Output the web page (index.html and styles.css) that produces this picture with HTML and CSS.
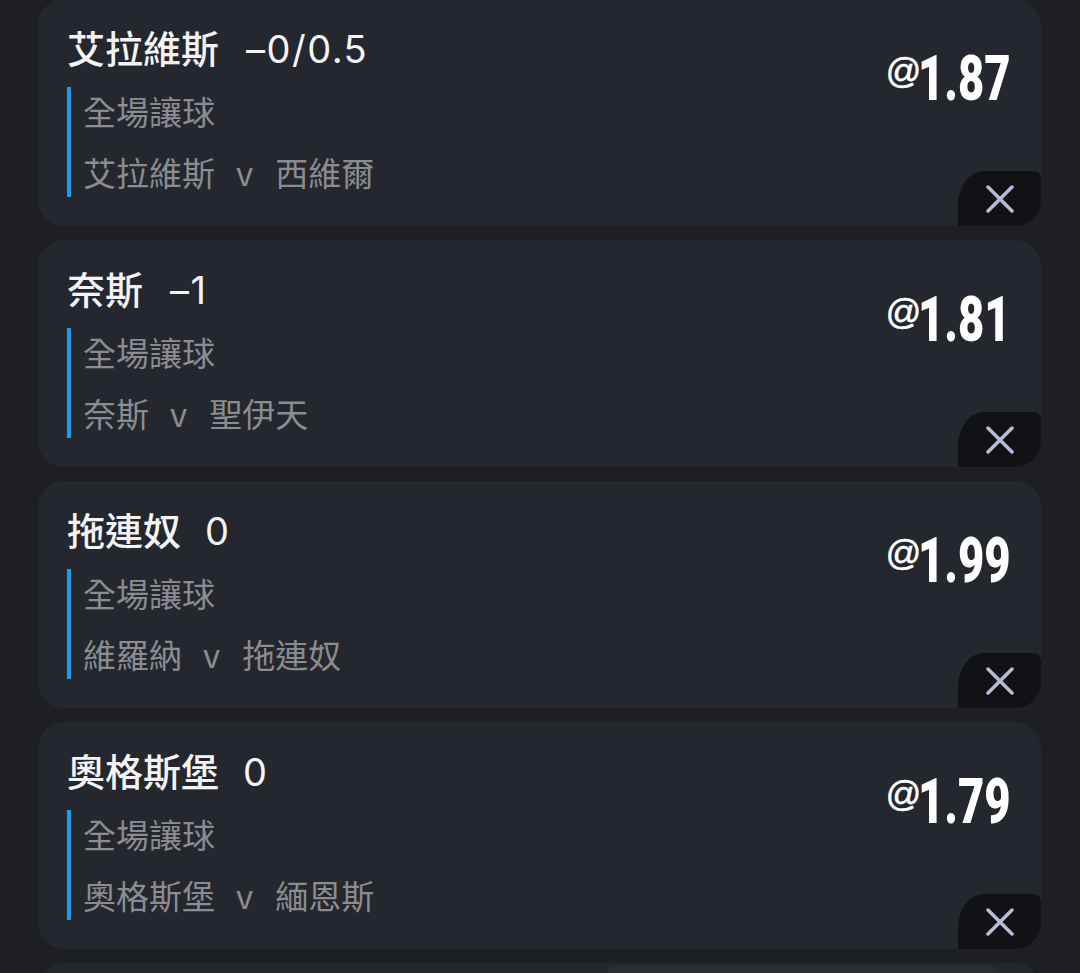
FILE: index.html
```html
<!DOCTYPE html>
<html lang="zh-Hant">
<head>
<meta charset="utf-8">
<title>Bet slip</title>
<link rel="stylesheet" href="styles.css">
</head>
<body>
<div class="list">
  <div class="card">
    <div class="info">
      <div class="title">艾拉維斯<span class="line">–0/0.5</span></div>
      <div class="detail">
        <div class="row">全場讓球</div>
        <div class="row">艾拉維斯<span class="vs">v</span>西維爾</div>
      </div>
    </div>
    <div class="odds"><span class="at">@</span><span class="num">1.87</span></div>
    <button class="close" aria-label="remove"><svg viewBox="0 0 28 28" width="28" height="28"><path d="M2 2L26 26M26 2L2 26"/></svg></button>
  </div>
  <div class="card">
    <div class="info">
      <div class="title">奈斯<span class="line">–1</span></div>
      <div class="detail">
        <div class="row">全場讓球</div>
        <div class="row">奈斯<span class="vs">v</span>聖伊天</div>
      </div>
    </div>
    <div class="odds"><span class="at">@</span><span class="num">1.81</span></div>
    <button class="close" aria-label="remove"><svg viewBox="0 0 28 28" width="28" height="28"><path d="M2 2L26 26M26 2L2 26"/></svg></button>
  </div>
  <div class="card">
    <div class="info">
      <div class="title">拖連奴<span class="line short">0</span></div>
      <div class="detail">
        <div class="row">全場讓球</div>
        <div class="row">維羅納<span class="vs">v</span>拖連奴</div>
      </div>
    </div>
    <div class="odds"><span class="at">@</span><span class="num">1.99</span></div>
    <button class="close" aria-label="remove"><svg viewBox="0 0 28 28" width="28" height="28"><path d="M2 2L26 26M26 2L2 26"/></svg></button>
  </div>
  <div class="card">
    <div class="info">
      <div class="title">奧格斯堡<span class="line short">0</span></div>
      <div class="detail">
        <div class="row">全場讓球</div>
        <div class="row">奧格斯堡<span class="vs">v</span>緬恩斯</div>
      </div>
    </div>
    <div class="odds"><span class="at">@</span><span class="num">1.79</span></div>
    <button class="close" aria-label="remove"><svg viewBox="0 0 28 28" width="28" height="28"><path d="M2 2L26 26M26 2L2 26"/></svg></button>
  </div>
  <div class="card partial">
    <div class="tab"></div>
  </div>
</div>
</body>
</html>
```
FILE: styles.css
```css
html, body {
  margin: 0;
  padding: 0;
  background: #1d1f25;
  height: 973px;
  overflow: hidden;
}

body {
  font-family: "Noto Sans CJK TC", "Noto Sans", sans-serif;
}

.list {
  display: flex;
  flex-direction: column;
  gap: 14px;
  margin: -1px 39px 0 38px;
}

.card {
  position: relative;
  display: flex;
  justify-content: space-between;
  align-items: flex-start;
  height: 227px;
  box-sizing: border-box;
  padding: 24px 30px 28px 29px;
  background: #25272e;
  border-radius: 26px;
  overflow: hidden;
}

.title {
  font-size: 38px;
  line-height: 48px;
  font-weight: 500;
  color: #f4f4f6;
  white-space: nowrap;
}

.line {
  font-family: Inter, "Noto Sans", sans-serif;
  margin-left: 27px;
  font-weight: 400;
  letter-spacing: 1.5px;
}

.line.short {
  margin-left: 24px;
}

.detail {
  margin-top: 14px;
  border-left: 4px solid #1b9cf2;
  padding-left: 12px;
  display: flex;
  flex-direction: column;
  gap: 12px;
}

.row {
  font-size: 33px;
  line-height: 49px;
  color: #8b8c91;
  white-space: nowrap;
}

.vs {
  margin: 0 22px 0 21px;
}

.odds {
  display: flex;
  align-items: flex-start;
  margin-top: 24px;
  color: #ffffff;
}

.at {
  font-family: "Liberation Sans", Arial, sans-serif;
  font-size: 35px;
  line-height: 40px;
  margin-top: 4px;
  margin-right: -39px;
  -webkit-text-stroke: 0.6px #ffffff;
}

.num {
  font-family: Roboto, "Liberation Sans", sans-serif;
  font-weight: 900;
  font-size: 63px;
  line-height: 63px;
  transform: scaleX(0.72);
  transform-origin: right center;
}

.close {
  position: absolute;
  right: 0;
  bottom: 0;
  width: 83px;
  height: 55px;
  padding: 0;
  border: 0;
  background: #111216;
  border-radius: 26px 8px 0 0 / 34px 8px 0 0;
  display: flex;
  align-items: center;
  justify-content: center;
}

.close svg {
  display: block;
  fill: none;
  stroke: #b9bbd8;
  stroke-width: 3.5;
  stroke-linecap: round;
}

.partial {
  padding: 0;
  justify-content: flex-end;
}

.tab {
  width: 393px;
  height: 30px;
  margin-right: 41px;
  margin-top: 2px;
  background: #2b2d35;
  border-radius: 10px;
}
```
